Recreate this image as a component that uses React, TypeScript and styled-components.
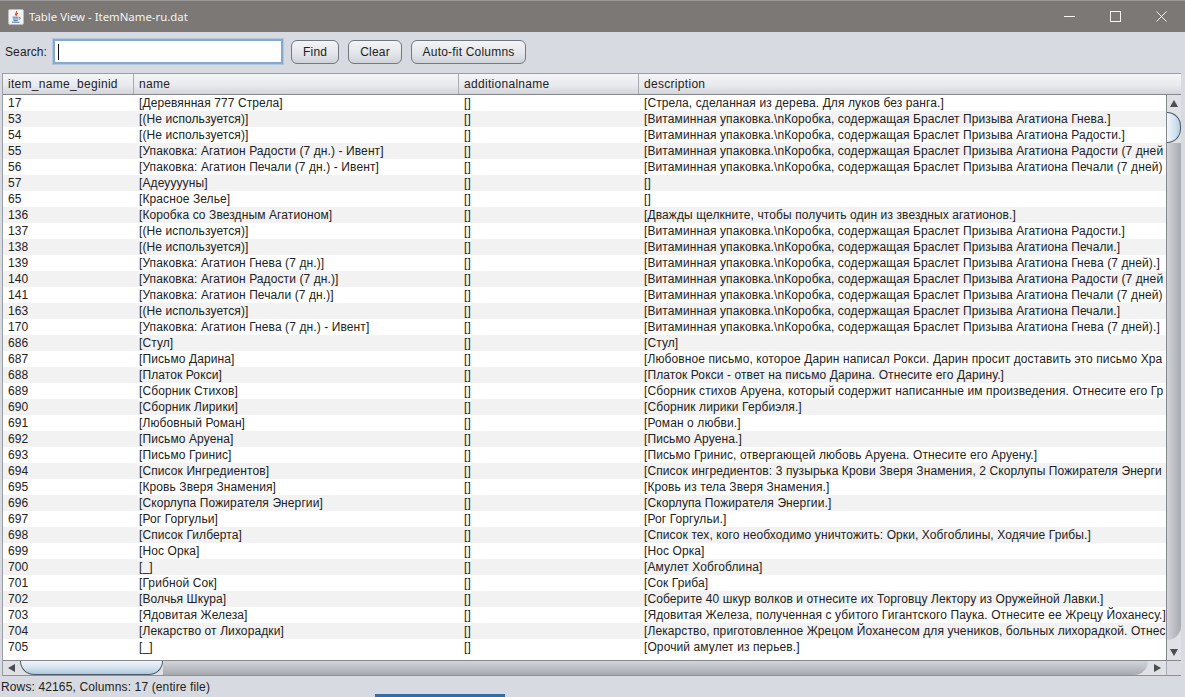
import React from "react";
import styled, { createGlobalStyle } from "styled-components";

const rows: [string, string, string][] = [
  ["17", "[Деревянная 777 Стрела]", "[Стрела, сделанная из дерева. Для луков без ранга.]"],
  ["53", "[(Не используется)]", "[Витаминная упаковка.\\nКоробка, содержащая Браслет Призыва Агатиона Гнева.]"],
  ["54", "[(Не используется)]", "[Витаминная упаковка.\\nКоробка, содержащая Браслет Призыва Агатиона Радости.]"],
  ["55", "[Упаковка: Агатион Радости (7 дн.) - Ивент]", "[Витаминная упаковка.\\nКоробка, содержащая Браслет Призыва Агатиона Радости (7 дней"],
  ["56", "[Упаковка: Агатион Печали (7 дн.) - Ивент]", "[Витаминная упаковка.\\nКоробка, содержащая Браслет Призыва Агатиона Печали (7 дней)"],
  ["57", "[Адеууууны]", "[]"],
  ["65", "[Красное Зелье]", "[]"],
  ["136", "[Коробка со Звездным Агатионом]", "[Дважды щелкните, чтобы получить один из звездных агатионов.]"],
  ["137", "[(Не используется)]", "[Витаминная упаковка.\\nКоробка, содержащая Браслет Призыва Агатиона Радости.]"],
  ["138", "[(Не используется)]", "[Витаминная упаковка.\\nКоробка, содержащая Браслет Призыва Агатиона Печали.]"],
  ["139", "[Упаковка: Агатион Гнева (7 дн.)]", "[Витаминная упаковка.\\nКоробка, содержащая Браслет Призыва Агатиона Гнева (7 дней).]"],
  ["140", "[Упаковка: Агатион Радости (7 дн.)]", "[Витаминная упаковка.\\nКоробка, содержащая Браслет Призыва Агатиона Радости (7 дней"],
  ["141", "[Упаковка: Агатион Печали (7 дн.)]", "[Витаминная упаковка.\\nКоробка, содержащая Браслет Призыва Агатиона Печали (7 дней)"],
  ["163", "[(Не используется)]", "[Витаминная упаковка.\\nКоробка, содержащая Браслет Призыва Агатиона Печали.]"],
  ["170", "[Упаковка: Агатион Гнева (7 дн.) - Ивент]", "[Витаминная упаковка.\\nКоробка, содержащая Браслет Призыва Агатиона Гнева (7 дней).]"],
  ["686", "[Стул]", "[Стул]"],
  ["687", "[Письмо Дарина]", "[Любовное письмо, которое Дарин написал Рокси. Дарин просит доставить это письмо Хра"],
  ["688", "[Платок Рокси]", "[Платок Рокси - ответ на письмо Дарина. Отнесите его Дарину.]"],
  ["689", "[Сборник Стихов]", "[Сборник стихов Аруена, который содержит написанные им произведения. Отнесите его Гр"],
  ["690", "[Сборник Лирики]", "[Сборник лирики Гербиэля.]"],
  ["691", "[Любовный Роман]", "[Роман о любви.]"],
  ["692", "[Письмо Аруена]", "[Письмо Аруена.]"],
  ["693", "[Письмо Гринис]", "[Письмо Гринис, отвергающей любовь Аруена. Отнесите его Аруену.]"],
  ["694", "[Список Ингредиентов]", "[Список ингредиентов: 3 пузырька Крови Зверя Знамения, 2 Скорлупы Пожирателя Энерги"],
  ["695", "[Кровь Зверя Знамения]", "[Кровь из тела Зверя Знамения.]"],
  ["696", "[Скорлупа Пожирателя Энергии]", "[Скорлупа Пожирателя Энергии.]"],
  ["697", "[Рог Горгульи]", "[Рог Горгульи.]"],
  ["698", "[Список Гилберта]", "[Список тех, кого необходимо уничтожить: Орки, Хобгоблины, Ходячие Грибы.]"],
  ["699", "[Нос Орка]", "[Нос Орка]"],
  ["700", "[_]", "[Амулет Хобгоблина]"],
  ["701", "[Грибной Сок]", "[Сок Гриба]"],
  ["702", "[Волчья Шкура]", "[Соберите 40 шкур волков и отнесите их Торговцу Лектору из Оружейной Лавки.]"],
  ["703", "[Ядовитая Железа]", "[Ядовитая Железа, полученная с убитого Гигантского Паука. Отнесите ее Жрецу Йоханесу.]"],
  ["704", "[Лекарство от Лихорадки]", "[Лекарство, приготовленное Жрецом Йоханесом для учеников, больных лихорадкой. Отнес"],
  ["705", "[_]", "[Орочий амулет из перьев.]"],
];

const Global = createGlobalStyle`
  html, body { margin: 0; padding: 0; }
  body { font-family: "Liberation Sans", Arial, sans-serif; }
`;

const Frame = styled.div`
  width: 1185px;
  height: 697px;
  display: flex;
  flex-direction: column;
  overflow: hidden;
  background: #d7dae0;
  font-size: 12px;
  letter-spacing: 0.1px;
  color: #222;
`;
const TitleBar = styled.div`
  height: 32px;
  flex: none;
  box-sizing: border-box;
  border-top: 1px solid #9b9a98;
  background: #7b7875;
  display: flex;
  align-items: center;
  padding-left: 8px;
  padding-right: 1px;
  color: #f4f4f4;
  font-family: "Noto Sans", sans-serif;
  font-size: 11.4px;
  letter-spacing: 0;
`;
const TitleText = styled.span`
  margin-left: 5px;
  flex: 1;
`;
const WinButton = styled.button`
  width: 46px;
  height: 31px;
  border: none;
  padding: 0;
  background: transparent;
  display: flex;
  align-items: center;
  justify-content: center;
`;
const Toolbar = styled.div`
  height: 41px;
  flex: none;
  display: flex;
  align-items: center;
  padding: 0 5px 2px;
  box-sizing: border-box;
`;
const SearchLabel = styled.span`
  margin-right: 6px;
`;
const SearchBox = styled.div`
  width: 230px;
  height: 25px;
  box-sizing: border-box;
  border: 2px solid #85a9cf;
  background: #fff;
  margin-right: 8px;
  display: flex;
  align-items: center;
  padding-left: 3px;
  box-shadow: 0 0 0 1px #b4c6da;
`;
const Caret = styled.i`
  width: 1px;
  height: 16px;
  background: #111;
`;
const ToolButton = styled.button<{ $w: number }>`
  width: ${(p) => p.$w}px;
  height: 24px;
  margin-right: 9px;
  padding: 0;
  border: 1px solid #717880;
  border-radius: 6px;
  background: linear-gradient(#f3f4f6, #e4e6ea 55%, #cfd2d8);
  font: inherit;
  letter-spacing: 0.2px;
  color: #222;
`;
const Grid = styled.div`
  flex: none;
  height: 602px;
  margin: 0 4px 0 2px;
  display: flex;
  flex-direction: column;
  border-left: 1px solid #9a9ea5;
  border-bottom: 1px solid #8d9096;
`;
const HeaderRow = styled.div`
  height: 22px;
  flex: none;
  box-sizing: border-box;
  display: flex;
  border-top: 1px solid #9a9ea5;
  border-bottom: 1px solid #84878c;
  background: linear-gradient(#f4f5f7, #e8e9ec 60%, #d3d5da);
  letter-spacing: 0.3px;
`;
const HeaderCell = styled.div<{ $w?: number }>`
  ${(p) => (p.$w ? `width: ${p.$w}px;` : "flex: 1;")}
  flex-shrink: ${(p) => (p.$w ? 0 : 1)};
  box-sizing: border-box;
  padding-left: 5px;
  line-height: 20px;
  border-right: ${(p) => (p.$w ? "1px solid #a9acb2" : "none")};
`;
const Middle = styled.div`
  flex: 1;
  min-height: 0;
  display: flex;
`;
const Body = styled.div`
  flex: 1;
  min-width: 0;
  overflow: hidden;
  background: #fff;
`;
const Row = styled.div<{ $odd: boolean }>`
  height: 16px;
  display: flex;
  background: ${(p) => (p.$odd ? "#f2f2f2" : "#fff")};
  line-height: 16px;
`;
const Cell = styled.div<{ $w?: number }>`
  ${(p) => (p.$w ? `width: ${p.$w}px; flex: none;` : "flex: 1; min-width: 0;")}
  box-sizing: border-box;
  padding-left: 5px;
  white-space: nowrap;
  overflow: hidden;
`;
const VBar = styled.div`
  width: 15px;
  flex: none;
  display: flex;
  flex-direction: column;
  align-items: center;
  background: #dfe1e5;
  border-left: 1px solid #85888e;
  box-sizing: border-box;
  overflow: hidden;
`;
const VTrack = styled.div`
  flex: 1;
  width: 100%;
  display: flex;
  flex-direction: column;
`;
const VThumb = styled.div`
  height: 31px;
  margin-top: 4px;
  flex: none;
  box-sizing: border-box;
  border: 1px solid #4f5a66;
  border-left: none;
  border-radius: 0 15px 15px 0;
  background: linear-gradient(90deg, #f2f6fa, #cfe0ee 65%, #b5cde2);
`;
const VCap = styled.div`
  flex: 1;
  margin-bottom: 9px;
  border-bottom-right-radius: 14px;
  background: linear-gradient(90deg, #d3d5d9, #a6a9af);
`;
const Arrow = styled.div<{ $dir: "up" | "down" | "left" | "right" }>`
  flex: none;
  width: 0;
  height: 0;
  ${(p) =>
    p.$dir === "up"
      ? "border-left: 4px solid transparent; border-right: 4px solid transparent; border-bottom: 7px solid #4a4d52; margin: 5px 0 1px;"
      : p.$dir === "down"
      ? "border-left: 4px solid transparent; border-right: 4px solid transparent; border-top: 7px solid #4a4d52; margin: 0 0 4px;"
      : p.$dir === "left"
      ? "border-top: 4px solid transparent; border-bottom: 4px solid transparent; border-right: 7px solid #4a4d52; margin-left: 5px;"
      : "border-top: 4px solid transparent; border-bottom: 4px solid transparent; border-left: 7px solid #4a4d52; margin: 0 5px 0 6px;"}
`;
const HBar = styled.div`
  height: 15px;
  flex: none;
  display: flex;
  align-items: center;
  background: #dfe1e5;
  border-top: 1px solid #85888e;
  box-sizing: border-box;
  overflow: hidden;
`;
const HThumb = styled.div`
  width: 143px;
  height: 100%;
  margin-left: 5px;
  flex: none;
  box-sizing: border-box;
  border: 1px solid #4f5a66;
  border-top: none;
  border-radius: 0 0 14px 14px;
  background: linear-gradient(#f2f6fa, #cfe0ee 60%, #aac6dc);
`;
const HCap = styled.div`
  flex: 1;
  height: 100%;
  border-bottom-right-radius: 14px;
  background: linear-gradient(#d3d5d9, #a6a9af);
`;
const Corner = styled.div`
  width: 15px;
  height: 100%;
  flex: none;
  background: #d9dbe0;
  border-left: 1px solid #a8abb1;
  box-sizing: border-box;
`;
const StatusBar = styled.div`
  flex: 1;
  display: flex;
  align-items: center;
  padding-left: 1px;
  box-sizing: border-box;
  position: relative;
  letter-spacing: 0.13px;
`;
const TaskbarPeek = styled.div`
  position: absolute;
  left: 375px;
  bottom: 0;
  width: 130px;
  height: 3px;
  background: #2f6ea8;
`;

const JavaIcon = () => (
  <svg width="16" height="16" viewBox="0 0 16 16">
    <rect x="0.5" y="0.5" width="15" height="15" rx="1.5" fill="#f4f4f6" stroke="#b9bcc2" />
    <path d="M8.5 2c1 1.5-2 2.5-1 4.5M10 4c-1.5 1-2 1.6-1 2.8" fill="none" stroke="#d8552b" strokeWidth="1.1" />
    <path d="M4.5 8.2h6M4.8 10h5.6M5.5 11.6h4.2M4 13.2h7.5M11 8.5c1.6-.4 1.8 1.4 0 1.8" fill="none" stroke="#4a76a8" strokeWidth="1" />
  </svg>
);

export default function App() {
  return (
    <Frame>
      <Global />
      <TitleBar>
        <JavaIcon />
        <TitleText>Table View - ItemName-ru.dat</TitleText>
        <WinButton aria-label="minimize">
          <svg width="11" height="11" viewBox="0 0 11 11"><path d="M0 5.5h11" stroke="#f4f4f4" /></svg>
        </WinButton>
        <WinButton aria-label="maximize">
          <svg width="11" height="11" viewBox="0 0 11 11"><rect x=".5" y=".5" width="10" height="10" fill="none" stroke="#f4f4f4" /></svg>
        </WinButton>
        <WinButton aria-label="close">
          <svg width="11" height="11" viewBox="0 0 11 11"><path d="M.5.5l10 10M10.5.5l-10 10" stroke="#f4f4f4" /></svg>
        </WinButton>
      </TitleBar>
      <Toolbar>
        <SearchLabel>Search:</SearchLabel>
        <SearchBox><Caret /></SearchBox>
        <ToolButton $w={48}>Find</ToolButton>
        <ToolButton $w={54}>Clear</ToolButton>
        <ToolButton $w={115}>Auto-fit Columns</ToolButton>
      </Toolbar>
      <Grid>
        <HeaderRow>
          <HeaderCell $w={131}>item_name_beginid</HeaderCell>
          <HeaderCell $w={325}>name</HeaderCell>
          <HeaderCell $w={180}>additionalname</HeaderCell>
          <HeaderCell>description</HeaderCell>
        </HeaderRow>
        <Middle>
          <Body>
            {rows.map((r, i) => (
              <Row key={r[0]} $odd={i % 2 === 1}>
                <Cell $w={131}>{r[0]}</Cell>
                <Cell $w={325}>{r[1]}</Cell>
                <Cell $w={180}>[]</Cell>
                <Cell>{r[2]}</Cell>
              </Row>
            ))}
          </Body>
          <VBar>
            <Arrow $dir="up" />
            <VTrack>
              <VThumb />
              <VCap />
            </VTrack>
            <Arrow $dir="down" />
          </VBar>
        </Middle>
        <HBar>
          <Arrow $dir="left" />
          <HThumb />
          <HCap />
          <Arrow $dir="right" />
          <Corner />
        </HBar>
      </Grid>
      <StatusBar>
        Rows: 42165, Columns: 17 (entire file)
        <TaskbarPeek />
      </StatusBar>
    </Frame>
  );
}
